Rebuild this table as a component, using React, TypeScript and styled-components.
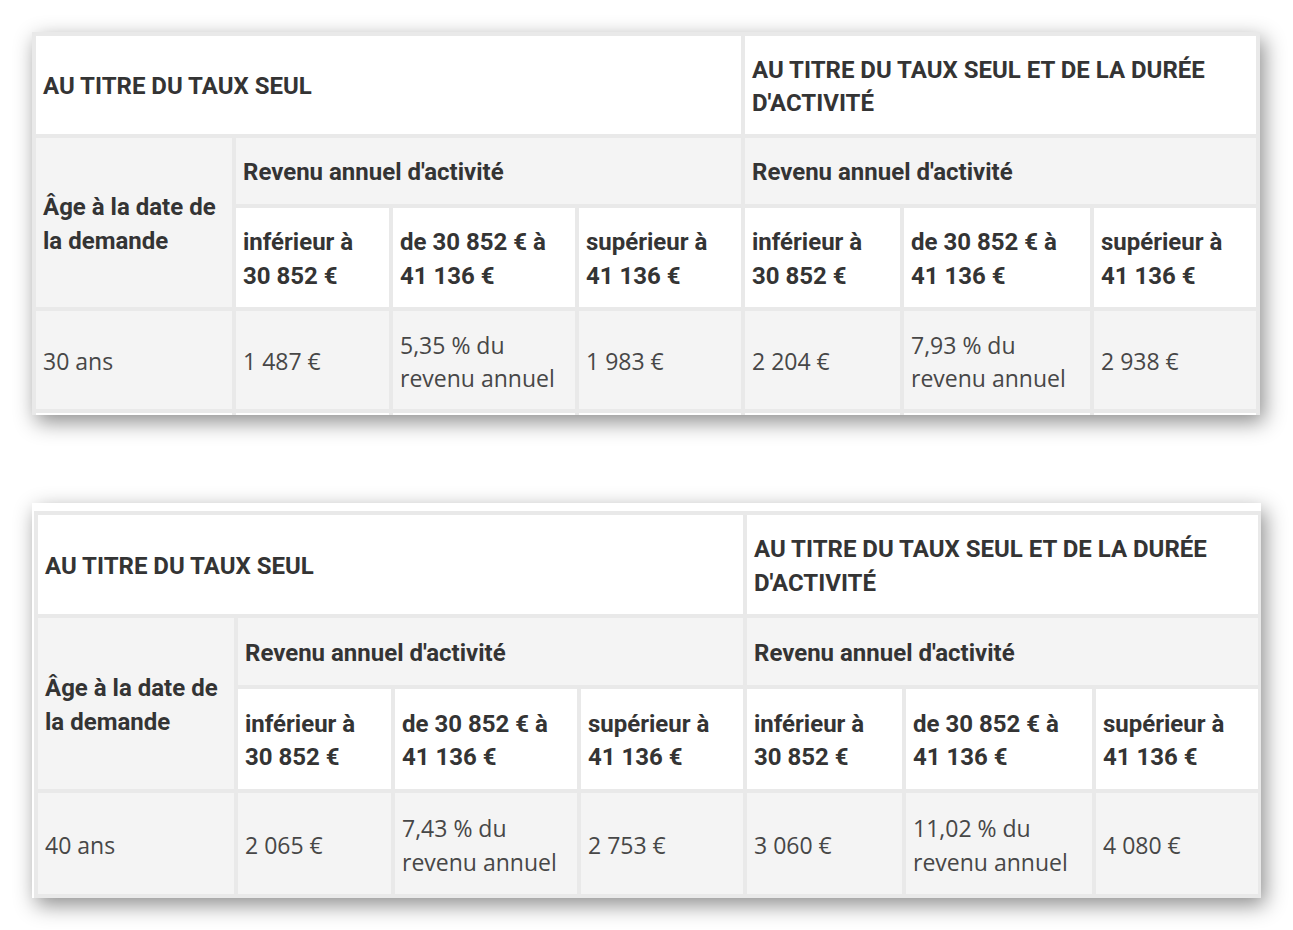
import React from "react";
import styled, { createGlobalStyle } from "styled-components";

const GlobalStyle = createGlobalStyle`
  html, body {
    margin: 0;
    padding: 0;
    background: #ffffff;
  }
`;

const Page = styled.main`
  display: flex;
  flex-direction: column;
  gap: 88px;
  padding: 32px 0 40px 32px;
`;

const Shot = styled.section<{ $w: number; $h: number; $pad: string }>`
  width: ${(p) => p.$w}px;
  height: ${(p) => p.$h}px;
  box-sizing: border-box;
  padding: ${(p) => p.$pad};
  overflow: hidden;
  background: #ffffff;
  box-shadow: 4px 7px 20px rgba(0, 0, 0, 0.45);
`;

const Grid = styled.table`
  width: 100%;
  table-layout: fixed;
  border-collapse: separate;
  border-spacing: 4px;
  background: #e9e9e9;
`;

const Row = styled.tr<{ $h: number }>`
  height: ${(p) => p.$h}px;
`;

const Cell = styled.td<{ $tone: "white" | "gray"; $strong?: boolean }>`
  box-sizing: border-box;
  padding: 4px 8px 0 7px;
  vertical-align: middle;
  background: ${(p) => (p.$tone === "white" ? "#ffffff" : "#f4f4f4")};
  color: ${(p) => (p.$strong ? "#343434" : "#474747")};
  font-family: ${(p) =>
    p.$strong ? `Roboto, "Open Sans", sans-serif` : `"Open Sans", Roboto, sans-serif`};
  font-weight: ${(p) => (p.$strong ? 700 : 400)};
  font-size: ${(p) => (p.$strong ? "24px" : "23px")};
  line-height: 33.5px;
  text-align: left;
`;

const widths = [196, 153, 182, 162, 155, 186, 162];

type Data = {
  age: string;
  values: string[][];
};

function RateTable({
  data,
  heights,
  trailingRow,
}: {
  data: Data;
  heights: number[];
  trailingRow?: boolean;
}) {
  const brackets = [
    ["inférieur à", "30 852 €"],
    ["de 30 852 € à", "41 136 €"],
    ["supérieur à", "41 136 €"],
  ];
  return (
    <Grid>
      <colgroup>
        {widths.map((w, i) => (
          <col key={i} style={{ width: w }} />
        ))}
      </colgroup>
      <thead>
        <Row $h={heights[0]}>
          <Cell as="th" colSpan={4} $tone="white" $strong>
            AU TITRE DU TAUX SEUL
          </Cell>
          <Cell as="th" colSpan={3} $tone="white" $strong>
            AU TITRE DU TAUX SEUL ET DE LA DURÉE
            <br />
            D'ACTIVITÉ
          </Cell>
        </Row>
        <Row $h={heights[1]}>
          <Cell as="th" rowSpan={2} $tone="gray" $strong>
            Âge à la date de
            <br />
            la demande
          </Cell>
          <Cell as="th" colSpan={3} $tone="gray" $strong>
            Revenu annuel d'activité
          </Cell>
          <Cell as="th" colSpan={3} $tone="gray" $strong>
            Revenu annuel d'activité
          </Cell>
        </Row>
        <Row $h={heights[2]}>
          {[...brackets, ...brackets].map((b, i) => (
            <Cell as="th" key={i} $tone="white" $strong>
              {b[0]}
              <br />
              {b[1]}
            </Cell>
          ))}
        </Row>
      </thead>
      <tbody>
        <Row $h={heights[3]}>
          <Cell $tone="gray">{data.age}</Cell>
          {data.values.map((v, i) => (
            <Cell key={i} $tone="gray">
              {v.map((line, j) => (
                <React.Fragment key={j}>
                  {j > 0 && <br />}
                  {line}
                </React.Fragment>
              ))}
            </Cell>
          ))}
        </Row>
        {trailingRow && (
          <Row $h={60}>
            {widths.map((_, i) => (
              <Cell key={i} $tone="white">
                {"\u00a0"}
              </Cell>
            ))}
          </Row>
        )}
      </tbody>
    </Grid>
  );
}

const first: Data = {
  age: "30 ans",
  values: [
    ["1 487 €"],
    ["5,35 % du", "revenu annuel"],
    ["1 983 €"],
    ["2 204 €"],
    ["7,93 % du", "revenu annuel"],
    ["2 938 €"],
  ],
};

const second: Data = {
  age: "40 ans",
  values: [
    ["2 065 €"],
    ["7,43 % du", "revenu annuel"],
    ["2 753 €"],
    ["3 060 €"],
    ["11,02 % du", "revenu annuel"],
    ["4 080 €"],
  ],
};

export default function App() {
  return (
    <>
      <GlobalStyle />
      <Page>
        <Shot $w={1228} $h={383} $pad="0">
          <RateTable data={first} heights={[98, 66, 99, 98]} trailingRow />
        </Shot>
        <Shot $w={1229} $h={395} $pad="8px 0 0 2px">
          <RateTable data={second} heights={[99, 67, 100, 101]} />
        </Shot>
      </Page>
    </>
  );
}
